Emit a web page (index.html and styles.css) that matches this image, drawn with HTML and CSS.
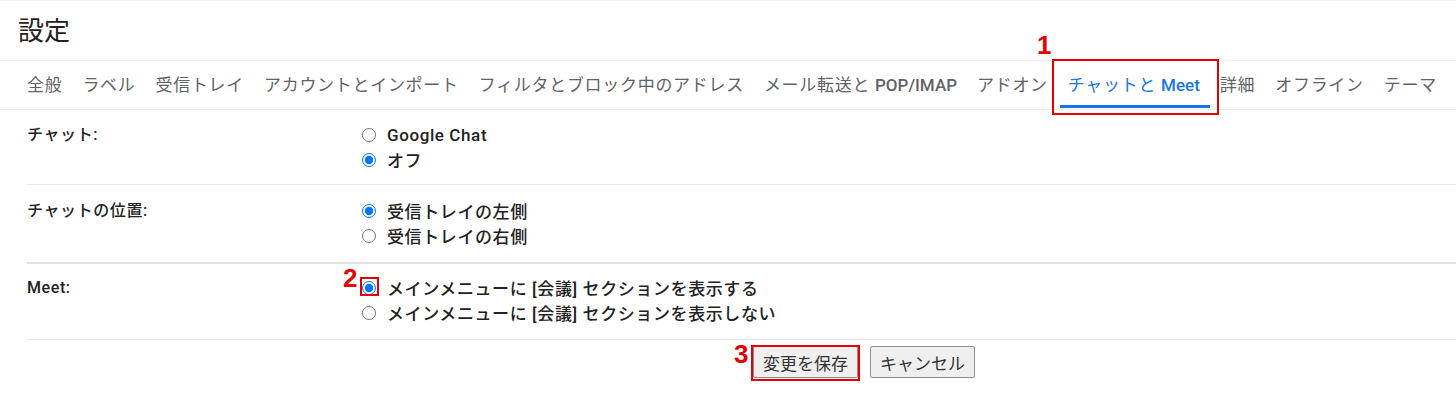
FILE: index.html
```html
<!DOCTYPE html>
<html lang="ja">
<head>
<meta charset="utf-8">
<title>設定</title>
<link rel="stylesheet" href="styles.css">
</head>
<body>
<div class="page">
  <header class="header"><h1 class="title">設定</h1></header>
  <nav class="tabs">
    <span class="tab">全般</span>
    <span class="tab">ラベル</span>
    <span class="tab">受信トレイ</span>
    <span class="tab">アカウントとインポート</span>
    <span class="tab">フィルタとブロック中のアドレス</span>
    <span class="tab">メール転送と <span class="lat">POP/IMAP</span></span>
    <span class="tab">アドオン</span>
    <span class="tab tab-active">チャットと <span class="lat">Meet</span></span>
    <span class="tab">詳細</span>
    <span class="tab">オフライン</span>
    <span class="tab">テーマ</span>
  </nav>
  <main class="content">
    <section class="row row-1">
      <div class="label">チャット:</div>
      <div class="options">
        <label class="opt"><input type="radio" name="chat"><span>Google Chat</span></label>
        <label class="opt"><input type="radio" name="chat" checked><span>オフ</span></label>
      </div>
    </section>
    <section class="row row-2">
      <div class="label">チャットの位置:</div>
      <div class="options">
        <label class="opt"><input type="radio" name="pos" checked><span>受信トレイの左側</span></label>
        <label class="opt"><input type="radio" name="pos"><span>受信トレイの右側</span></label>
      </div>
    </section>
    <section class="row row-3">
      <div class="label">Meet:</div>
      <div class="options">
        <label class="opt"><input type="radio" name="meet" checked><span>メインメニューに [会議] セクションを表示する</span></label>
        <label class="opt"><input type="radio" name="meet"><span>メインメニューに [会議] セクションを表示しない</span></label>
      </div>
    </section>
    <div class="actions">
      <button class="btn">変更を保存</button>
      <button class="btn">キャンセル</button>
    </div>
  </main>

  <span class="num num-1">1</span>
  <span class="box box-1"></span>
  <span class="num num-2">2</span>
  <span class="box box-2"></span>
  <span class="num num-3">3</span>
  <span class="box box-3"></span>
</div>
</body>
</html>
```

FILE: styles.css
```css
html, body {
  margin: 0;
  padding: 0;
  background: #fff;
}
body {
  font-family: Roboto, "Noto Sans CJK JP", sans-serif;
  color: #222;
}
.page {
  position: relative;
  width: 1456px;
  height: 401px;
  overflow: hidden;
}
.header {
  box-sizing: border-box;
  height: 61px;
  border-top: 1px solid #f1f1f1;
  border-bottom: 1px solid #efefef;
  display: flex;
  align-items: center;
  padding-left: 18px;
}
.title {
  margin: 0;
  font-size: 26px;
  font-weight: 400;
  color: #222;
  line-height: 1;
}
.tabs {
  box-sizing: border-box;
  height: 49px;
  border-bottom: 1px solid #ececec;
  display: flex;
  align-items: stretch;
  padding-left: 17px;
  white-space: nowrap;
}
.tab {
  position: relative;
  display: block;
  line-height: 48px;
  padding: 0 10px;
  font-size: 17px;
  letter-spacing: 0.7px;
  color: #5f6368;
}
.tab .lat {
  font-weight: 500;
  letter-spacing: 0;
}
.tab-active {
  color: #1a73e8;
}
.tab-active::after {
  content: "";
  position: absolute;
  left: 2px;
  right: 0;
  bottom: 1px;
  height: 3px;
  background: #1a73e8;
}
.content {
  padding-left: 27px;
}
.row {
  display: grid;
  grid-template-columns: 331px 1fr;
  border-bottom: 1px solid #e8e8e8;
}
.row-1 { padding: 12px 0 12px; }
.row-2 { padding: 13px 0 14px; border-bottom: 2px solid #e3e3e3; }
.row-3 { padding: 11px 0 14px; }
.label {
  font-size: 16px;
  font-weight: 500;
  line-height: 25px;
  letter-spacing: 0.6px;
  color: #222;
}
.options {
  display: flex;
  flex-direction: column;
}
.opt {
  display: flex;
  align-items: center;
  height: 25px;
  font-size: 17px;
  font-weight: 500;
  letter-spacing: 0.6px;
  color: #222;
}
.opt input {
  margin: 0 11px 0 4px;
  width: 14px;
  height: 14px;
}
.actions {
  display: flex;
  gap: 12px;
  padding: 6px 0 0 726px;
}
.btn {
  box-sizing: border-box;
  height: 32px;
  padding: 0 9px;
  font-family: Roboto, "Noto Sans CJK JP", sans-serif;
  font-size: 17px;
  color: #333;
  background: #efefef;
  border: 1px solid #8f8f8f;
  border-radius: 2px;
}
.num {
  position: absolute;
  font-family: "Liberation Sans", Arial, sans-serif;
  font-weight: 700;
  font-size: 26px;
  line-height: 26px;
  color: #e60000;
}
.num-1 { left: 1037px; top: 32px; }
.num-2 { left: 343px; top: 265px; }
.num-3 { left: 734px; top: 341px; }
.box {
  position: absolute;
  box-sizing: border-box;
  border: 2px solid #e60000;
}
.box-1 { left: 1052px; top: 59px; width: 167px; height: 56px; }
.box-2 { left: 360px; top: 277px; width: 19px; height: 19px; }
.box-3 { left: 751px; top: 345px; width: 109px; height: 36px; }
```
